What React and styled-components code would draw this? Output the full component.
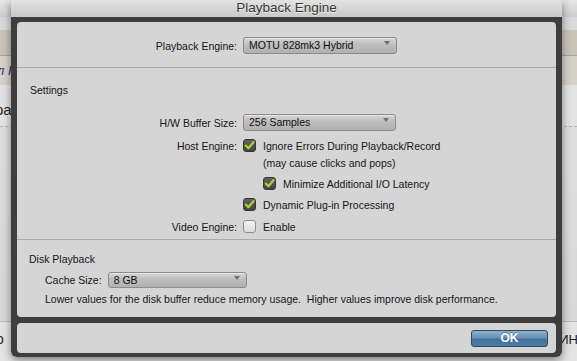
import React from 'react';
import styled, { createGlobalStyle } from 'styled-components';

const GlobalStyle = createGlobalStyle`
  html, body {
    margin: 0;
    padding: 0;
    width: 577px;
    height: 361px;
    overflow: hidden;
    background: #dcdcdc;
    font-family: "Liberation Sans", Arial, sans-serif;
  }
`;

const Screen = styled.div`
  position: relative;
  width: 577px;
  height: 361px;
  overflow: hidden;
`;

const Backdrop = styled.div`
  display: flex;
  flex-direction: column;
  width: 100%;
  height: 100%;
`;

const Stripe = styled.div`
  display: flex;
  justify-content: space-between;
  align-items: ${(p) => p.$align || 'center'};
  height: ${(p) => p.$h}px;
  background: ${(p) => p.$bg};
  border-bottom: ${(p) => p.$line || 'none'};
  box-sizing: border-box;
  overflow: hidden;
`;

const Snippet = styled.span`
  font-size: ${(p) => p.$size || 14}px;
  color: ${(p) => p.$color || '#222'};
  font-style: ${(p) => (p.$italic ? 'italic' : 'normal')};
  margin: ${(p) => p.$m || '0'};
  white-space: nowrap;
`;

const Dialog = styled.div`
  position: absolute;
  left: 11px;
  top: 0;
  width: 551px;
  display: flex;
  flex-direction: column;
  box-shadow: 0 3px 9px rgba(0, 0, 0, 0.45);
  border-radius: 0 0 6px 6px;
`;

const TitleBar = styled.div`
  height: 17px;
  line-height: 16px;
  text-align: center;
  font-size: 13.5px;
  color: #383838;
  text-shadow: 0 1px 0 rgba(255, 255, 255, 0.6);
  background: linear-gradient(to bottom, #e2e2e2, #c9c9c9);
`;

const Frame = styled.div`
  display: flex;
  flex-direction: column;
  gap: 6px;
  padding: 5px 6px 4px;
  background: #3e3e3e;
  border-radius: 0 0 6px 6px;
`;

const Panel = styled.div`
  display: flex;
  flex-direction: column;
  background: #d5d5d5;
  border-radius: 4px;
  height: ${(p) => p.$h}px;
  color: #161616;
  font-size: 10.5px;
`;

const Section = styled.div`
  display: flex;
  flex-direction: column;
  padding: ${(p) => p.$pad};
`;

const Divider = styled.div`
  height: 1px;
  background: #aaaaaa;
`;

const Heading = styled.div`
  height: 14px;
  line-height: 14px;
  padding-left: ${(p) => p.$indent}px;
`;

const Row = styled.div`
  display: flex;
  align-items: center;
  height: ${(p) => p.$h || 21}px;
  margin-top: ${(p) => p.$mt || 0}px;
  padding-left: ${(p) => p.$indent || 0}px;
`;

const Label = styled.div`
  width: ${(p) => (p.$auto ? 'auto' : '220px')};
  text-align: right;
  margin-right: 6px;
  white-space: nowrap;
`;

const Select = styled.div`
  display: flex;
  box-sizing: border-box;
  width: ${(p) => p.$w}px;
  height: ${(p) => p.$h || 17}px;
  padding: 0 6px 0 5px;
  line-height: ${(p) => (p.$h || 17) - 2}px;
  border: 1px solid #8b8b8b;
  border-radius: 3px;
  background: linear-gradient(to bottom, #d6d6d6 0%, #bdbdbd 45%, #b1b1b1 100%);
  box-shadow: inset 0 1px 0 rgba(255, 255, 255, 0.45);
  color: #111;
  white-space: nowrap;
`;

const Arrow = styled.span`
  margin-left: auto;
  margin-top: 3px;
  width: 0;
  height: 0;
  border-left: 3.5px solid transparent;
  border-right: 3.5px solid transparent;
  border-top: 4px solid #6f6f6f;
`;

const Box = styled.span`
  display: inline-flex;
  align-items: center;
  justify-content: center;
  box-sizing: border-box;
  width: 13px;
  height: 13px;
  margin-right: 7px;
  border-radius: 3px;
  flex-shrink: 0;
  border: 1px solid ${(p) => (p.$on ? '#353535' : '#8f8f8f')};
  background: ${(p) =>
    p.$on
      ? 'linear-gradient(to bottom, #626262, #444444)'
      : 'linear-gradient(to bottom, #f2f2f2, #dcdcdc)'};
`;

const Spacer = styled.div`
  width: ${(p) => p.$w}px;
  flex-shrink: 0;
`;

const Footer = styled.div`
  display: flex;
  justify-content: flex-end;
  align-items: center;
  height: 100%;
  padding-right: 8px;
`;

const OkButton = styled.button`
  width: 77px;
  height: 17px;
  padding: 0;
  border: 1px solid #2d4a63;
  border-radius: 3px;
  background: linear-gradient(to bottom, #8fb2cf 0%, #6790b4 45%, #44739b 55%, #4b7aa2 100%);
  color: #fff;
  font-family: "Liberation Sans", Arial, sans-serif;
  font-weight: bold;
  font-size: 12px;
  line-height: 15px;
  text-shadow: 0 -1px 0 rgba(0, 0, 0, 0.3);
`;

function Check({ on }) {
  return (
    <Box $on={on}>
      {on && (
        <svg width="11" height="11" viewBox="0 0 11 11">
          <path
            d="M1.8 5.6 L4.4 8.3 L9.4 2.2"
            fill="none"
            stroke="#a6d62c"
            strokeWidth="2.2"
            strokeLinecap="round"
            strokeLinejoin="round"
          />
        </svg>
      )}
    </Box>
  );
}

function Dropdown({ value, w, h }) {
  return (
    <Select $w={w} $h={h}>
      {value}
      <Arrow />
    </Select>
  );
}

export default function App() {
  return (
    <Screen>
      <GlobalStyle />
      <Backdrop>
        <Stripe $h={17} $bg="linear-gradient(to bottom, #e6e6e6, #cdcdcd)" />
        <Stripe $h={13} $bg="#d9d9d9" />
        <Stripe $h={26} $bg="#c9c4ba" $line="1px solid #a8a49c" />
        <Stripe $h={29} $bg="#d6d2c9">
          <Snippet $italic $size={13} $color="#2a3c6a" $m="0 0 0 -3px">л Н</Snippet>
        </Stripe>
        <Stripe $h={42} $bg="#e3e3e3" $line="1px dashed #b4b4b4" $align="flex-end">
          <Snippet $size={15} $m="0 0 8px -5px">pa</Snippet>
        </Stripe>
        <Stripe $h={195} $bg="linear-gradient(to bottom, #dedede, #d8d8d8)" $line="1px solid #b9b9b9" />
        <Stripe $h={39} $bg="#e4e4e4" $align="flex-start">
          <Snippet $size={14} $m="9px 0 0 -4px">o</Snippet>
          <Snippet $size={13} $m="10px -1px 0 0">ИН</Snippet>
        </Stripe>
      </Backdrop>

      <Dialog>
        <TitleBar>Playback Engine</TitleBar>
        <Frame>
          <Panel $h={295}>
            <Section $pad="15px 0 13px">
              <Row $h={17}>
                <Label>Playback Engine:</Label>
                <Dropdown value="MOTU 828mk3 Hybrid" w={154} />
              </Row>
            </Section>
            <Divider />
            <Section $pad="15px 0 2px">
              <Heading $indent={13}>Settings</Heading>
              <Row $mt={15}>
                <Label>H/W Buffer Size:</Label>
                <Dropdown value="256 Samples" w={153} />
              </Row>
              <Row $mt={2}>
                <Label>Host Engine:</Label>
                <Check on />
                Ignore Errors During Playback/Record
              </Row>
              <Row $h={14}>
                <Spacer $w={246} />
                (may cause clicks and pops)
              </Row>
              <Row $mt={3}>
                <Spacer $w={246} />
                <Check on />
                Minimize Additional I/O Latency
              </Row>
              <Row>
                <Spacer $w={226} />
                <Check on />
                Dynamic Plug-in Processing
              </Row>
              <Row $mt={1}>
                <Label>Video Engine:</Label>
                <Check />
                Enable
              </Row>
            </Section>
            <Divider />
            <Section $pad="12px 0 11px">
              <Heading $indent={12}>Disk Playback</Heading>
              <Row $mt={3} $indent={28}>
                <Label $auto>Cache Size:</Label>
                <Dropdown value="8 GB" w={139} h={16} />
              </Row>
              <Row $mt={2} $h={14} $indent={28}>
                Lower values for the disk buffer reduce memory usage.&nbsp; Higher values improve disk performance.
              </Row>
            </Section>
          </Panel>
          <Panel $h={30}>
            <Footer>
              <OkButton>OK</OkButton>
            </Footer>
          </Panel>
        </Frame>
      </Dialog>
    </Screen>
  );
}
